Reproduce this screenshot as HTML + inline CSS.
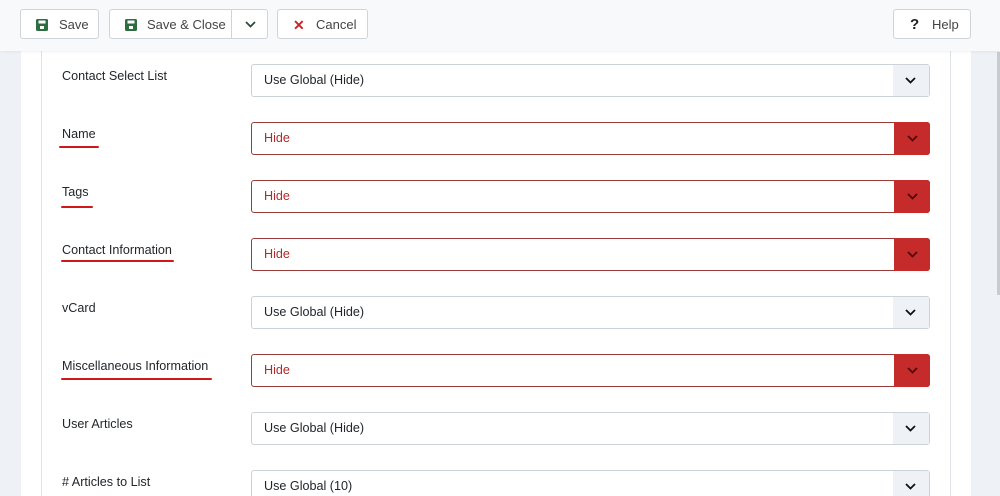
<!DOCTYPE html>
<html><head><style>
html,body{margin:0;width:1000px;height:496px;overflow:hidden}
body{background:#eef2f7;font-family:"Liberation Sans",sans-serif;position:relative}
.tb{position:absolute;left:0;top:0;width:1000px;height:51px;background:#f8f9fa;box-shadow:0 1px 3px rgba(0,0,0,.06);z-index:2}
.btn{position:absolute;top:9px;height:30px;border:1px solid #cfd4da;border-radius:3px;background:#fff;font-size:13px;color:#444;line-height:30px;box-sizing:border-box}
.card{position:absolute;left:21px;top:51px;width:950px;height:445px;background:#fff}
.fs{position:absolute;left:41px;top:51px;width:908px;height:445px;border-left:1px solid #dfe3e7;border-right:1px solid #dfe3e7}
.lbl{position:absolute;left:62px;font-size:12.6px;color:#22262a}
.sel{position:absolute;left:251px;width:679px;height:33px;border:1px solid #ccd2d8;border-radius:3px;box-sizing:border-box;font-size:12.6px;color:#22262a;line-height:31px;padding-left:12px;background:#fff}
.sel .ar{position:absolute;right:0;top:0;width:36px;height:31px;background:#eef2f7}
.sel.r{border-color:#9a3b3b;color:#b02a2a}
.sel.r .ar{background:#c52b2b;height:33px;top:-1px;right:-1px;border-radius:0 3px 3px 0}
.ar svg{position:absolute;left:12px;top:12px}
.sel.r .ar svg{top:13px;left:13px}
.ul{position:absolute;height:2px;background:#d01818;border-radius:1px}
</style></head><body>
<div class="tb">
<div class="btn" style="left:20px;width:79px"><svg style="position:absolute;left:15px;top:9px" width="12" height="12" viewBox="0 0 12 12"><rect x="0" y="0" width="12" height="12" rx="1.5" fill="#2c6e3f"/><rect x="2.5" y="1.5" width="7" height="3" fill="#fff"/><rect x="4" y="7" width="4" height="3" fill="#fff"/></svg><span style="position:absolute;left:38px">Save</span></div>
<div class="btn" style="left:109px;width:159px"><svg style="position:absolute;left:15px;top:9px" width="12" height="12" viewBox="0 0 12 12"><rect x="0" y="0" width="12" height="12" rx="1.5" fill="#2c6e3f"/><rect x="2.5" y="1.5" width="7" height="3" fill="#fff"/><rect x="4" y="7" width="4" height="3" fill="#fff"/></svg><span style="position:absolute;left:37px">Save &amp; Close</span><div style="position:absolute;left:121px;top:0;height:28px;border-left:1px solid #cfd4da;width:37px"><svg style="position:absolute;left:13px;top:11px" width="11" height="7" viewBox="0 0 11 7"><path d="M1 1l4.5 4.5L10 1" stroke="#2a4d3a" stroke-width="1.8" fill="none"/></svg></div></div>
<div class="btn" style="left:277px;width:91px"><span style="position:absolute;left:15px;color:#c62828;font-weight:bold;font-size:14px">✕</span><span style="position:absolute;left:38px">Cancel</span></div>
<div class="btn" style="left:893px;width:78px"><span style="position:absolute;left:16px;font-weight:bold;font-size:15px;color:#222">?</span><span style="position:absolute;left:38px">Help</span></div>
</div>
<div class="card"></div>
<div class="fs"></div>
<div style="position:absolute;left:997px;top:52px;width:3px;height:243px;background:#c8ccd0"></div>

<div class="lbl" style="top:69px">Contact Select List</div>
<div class="sel" style="top:64px">Use Global (Hide)<div class="ar"><svg width="11" height="7" viewBox="0 0 11 7"><path d="M1 1l4.5 4.5L10 1" stroke="#111" stroke-width="1.8" fill="none"/></svg></div></div>

<div class="lbl" style="top:127px">Name</div><div class="ul" style="left:59px;width:40px;top:146px"></div>
<div class="sel r" style="top:122px">Hide<div class="ar"><svg width="11" height="7" viewBox="0 0 11 7"><path d="M1 1l4.5 4.5L10 1" stroke="#4a0a0a" stroke-width="1.8" fill="none"/></svg></div></div>

<div class="lbl" style="top:185px">Tags</div><div class="ul" style="left:61px;width:32px;top:206px"></div>
<div class="sel r" style="top:180px">Hide<div class="ar"><svg width="11" height="7" viewBox="0 0 11 7"><path d="M1 1l4.5 4.5L10 1" stroke="#4a0a0a" stroke-width="1.8" fill="none"/></svg></div></div>

<div class="lbl" style="top:243px">Contact Information</div><div class="ul" style="left:61px;width:113px;top:260px"></div>
<div class="sel r" style="top:238px">Hide<div class="ar"><svg width="11" height="7" viewBox="0 0 11 7"><path d="M1 1l4.5 4.5L10 1" stroke="#4a0a0a" stroke-width="1.8" fill="none"/></svg></div></div>

<div class="lbl" style="top:301px">vCard</div>
<div class="sel" style="top:296px">Use Global (Hide)<div class="ar"><svg width="11" height="7" viewBox="0 0 11 7"><path d="M1 1l4.5 4.5L10 1" stroke="#111" stroke-width="1.8" fill="none"/></svg></div></div>

<div class="lbl" style="top:359px">Miscellaneous Information</div><div class="ul" style="left:61px;width:151px;top:378px"></div>
<div class="sel r" style="top:354px">Hide<div class="ar"><svg width="11" height="7" viewBox="0 0 11 7"><path d="M1 1l4.5 4.5L10 1" stroke="#4a0a0a" stroke-width="1.8" fill="none"/></svg></div></div>

<div class="lbl" style="top:417px">User Articles</div>
<div class="sel" style="top:412px">Use Global (Hide)<div class="ar"><svg width="11" height="7" viewBox="0 0 11 7"><path d="M1 1l4.5 4.5L10 1" stroke="#111" stroke-width="1.8" fill="none"/></svg></div></div>

<div class="lbl" style="top:475px"># Articles to List</div>
<div class="sel" style="top:470px">Use Global (10)<div class="ar"><svg width="11" height="7" viewBox="0 0 11 7"><path d="M1 1l4.5 4.5L10 1" stroke="#111" stroke-width="1.8" fill="none"/></svg></div></div>
</body></html>
